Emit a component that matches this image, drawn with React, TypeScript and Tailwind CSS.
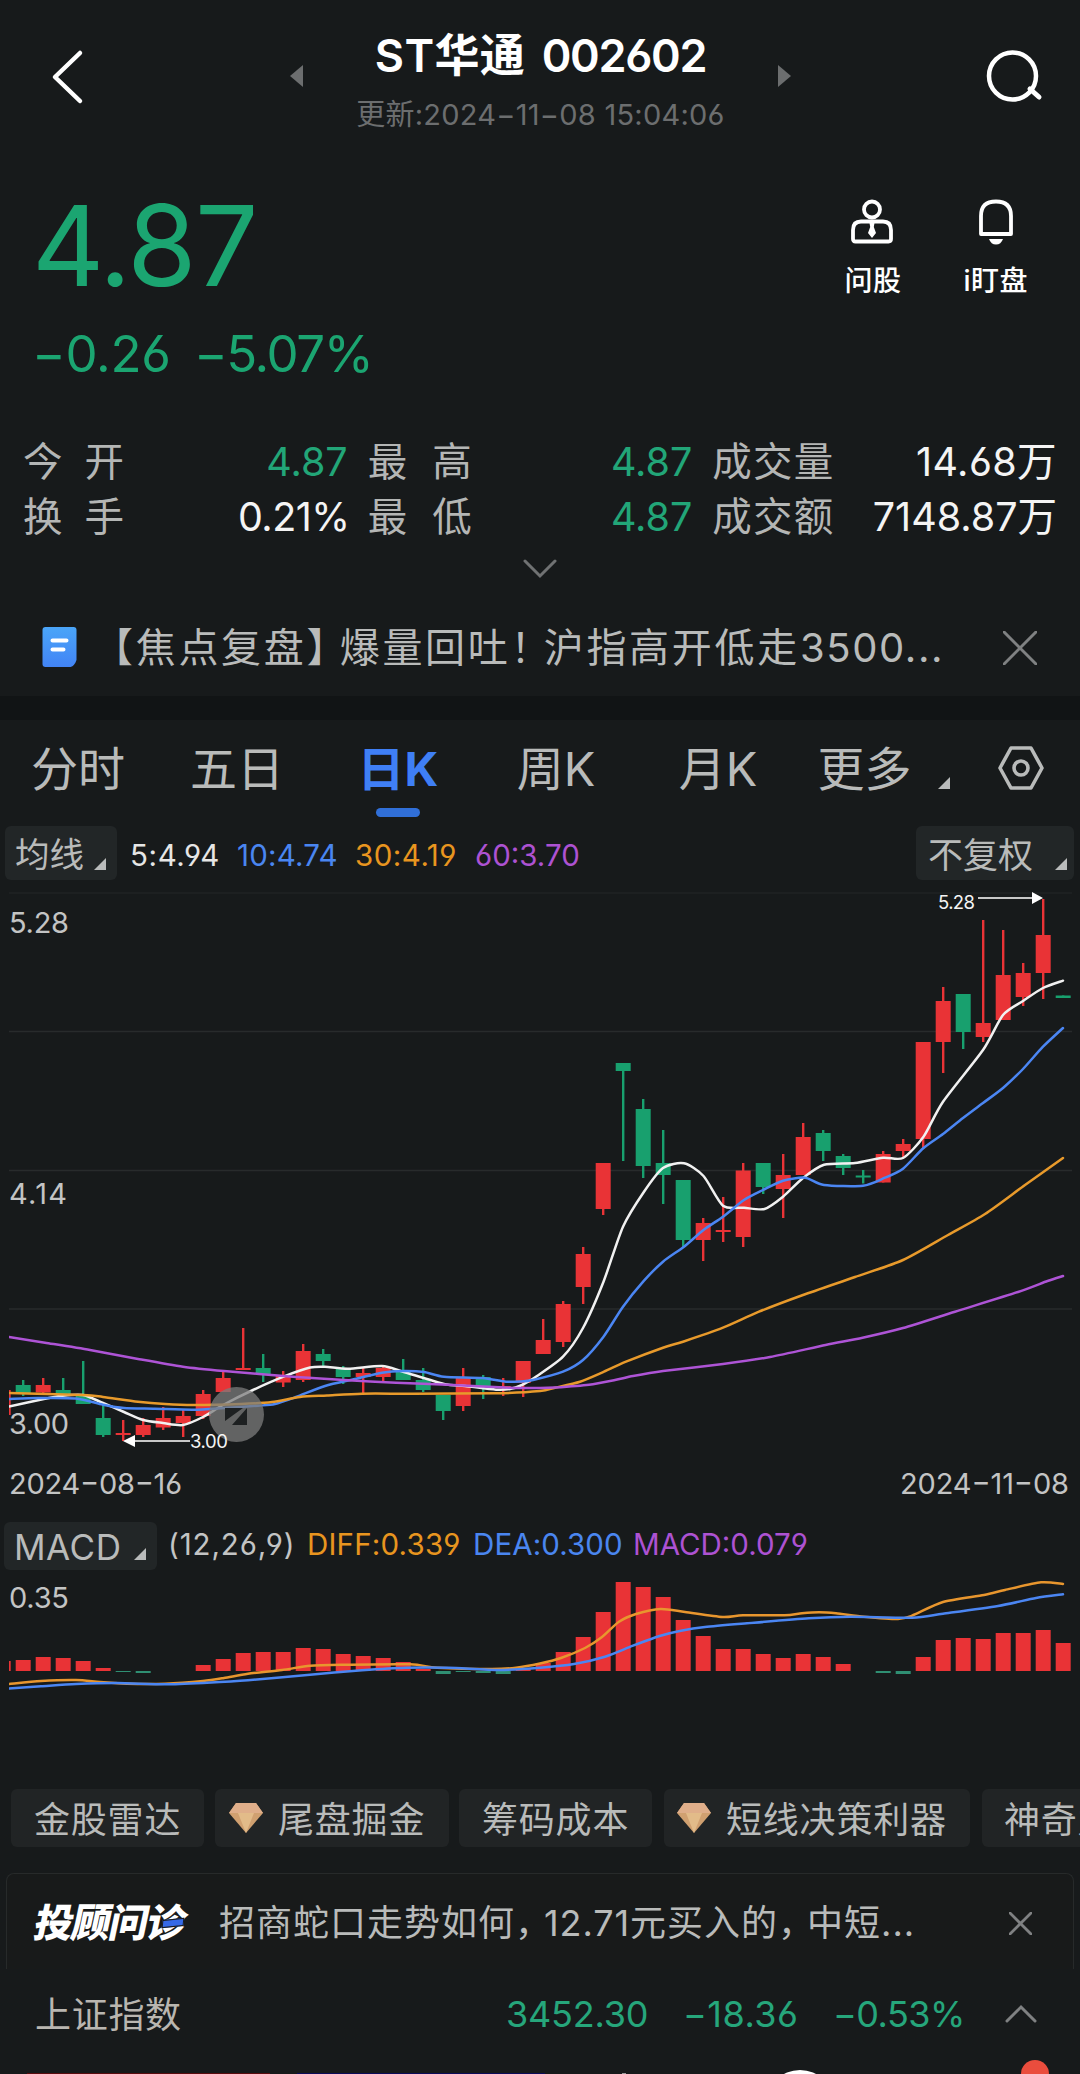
import type { ReactNode } from "react";

const UP = "#e93336";
const DOWN = "#18a06e";
const FIRST_X = 3.2;
const STEP = 20;

type Candle = [color: "r" | "g", top: number, bottom: number, high: number, low: number];

// y values of body top, body bottom, high and low
const candles: Candle[] = [
  ["r", 1390, 1415, 1390, 1415],
  ["g", 1385, 1393, 1380, 1396],
  ["r", 1385, 1392.5, 1378, 1393],
  ["g", 1390, 1394, 1378, 1396],
  ["g", 1395, 1404, 1361, 1404],
  ["g", 1418, 1435, 1405, 1437],
  ["r", 1433, 1435, 1420, 1441],
  ["r", 1425, 1435, 1418, 1437],
  ["r", 1418, 1427.5, 1407, 1430],
  ["r", 1416, 1423, 1410, 1437],
  ["r", 1394, 1416, 1390, 1419],
  ["r", 1378, 1392, 1370, 1392],
  ["r", 1368, 1370, 1328, 1370],
  ["g", 1368, 1374, 1354, 1382],
  ["r", 1376, 1382.5, 1371, 1387],
  ["r", 1351, 1380, 1344, 1382],
  ["g", 1354, 1361, 1349, 1366],
  ["g", 1369, 1377, 1366, 1384],
  ["r", 1373, 1377, 1367, 1393],
  ["r", 1368, 1377, 1366, 1381],
  ["g", 1371, 1380, 1359, 1380],
  ["g", 1380, 1390, 1368, 1392],
  ["g", 1395, 1411, 1395, 1420],
  ["r", 1377, 1406, 1368, 1411],
  ["g", 1377, 1386, 1375, 1399],
  ["r", 1386, 1388, 1378, 1396],
  ["r", 1361, 1383, 1361, 1397],
  ["r", 1340, 1354, 1319, 1354],
  ["r", 1304, 1342, 1301, 1347],
  ["r", 1254, 1287, 1247, 1304],
  ["r", 1163, 1209, 1163, 1215],
  ["g", 1063, 1071, 1063, 1161],
  ["g", 1109, 1166, 1099, 1178],
  ["g", 1163, 1175, 1130, 1204],
  ["g", 1180, 1240, 1180, 1247],
  ["r", 1223, 1240, 1218, 1261],
  ["r", 1230, 1232, 1197, 1242],
  ["r", 1170.5, 1237, 1163, 1247],
  ["g", 1163, 1187, 1163, 1194],
  ["r", 1175, 1189, 1154, 1218],
  ["r", 1137, 1175, 1123, 1175],
  ["g", 1133, 1151, 1130, 1161],
  ["g", 1156, 1168, 1154, 1175],
  ["g", 1175.5, 1177.5, 1170, 1183.5],
  ["r", 1154, 1182.5, 1151, 1182.5],
  ["r", 1144, 1151, 1139, 1158],
  ["r", 1042, 1139, 1042, 1149],
  ["r", 1001, 1042, 987, 1073],
  ["g", 994, 1032, 994, 1049],
  ["r", 1023, 1037, 920, 1042],
  ["r", 975, 1020, 930, 1020],
  ["r", 973, 997, 963, 1006],
  ["r", 935, 973, 899, 999],
  ["g", 995.5, 998, 995.5, 998],
];

const ma5 =
  "9,1406.5 45,1398.7 62,1395.7 83,1395 103,1403 124,1412 143,1420 163,1423 183,1425 203,1417 223,1405 253,1390 286,1375.7 310,1367.5 325,1366.7 348,1368.7 382,1366 403,1371.7 444,1384 465,1386 496,1389.7 510,1389 522,1385 537,1376 563,1356.7 583,1328 603.5,1281.7 623,1226.7 644,1191.7 663,1168 684,1163.3 703.5,1176 723,1205.7 744,1207.7 764.5,1209 783,1196.7 803,1178 824,1164.7 855,1163 883,1157.7 903,1158 923.5,1136.7 943,1101.7 983,1050 1003,1015 1023,1001 1043,988 1063,980.7";
const ma10 =
  "9,1399 38,1398 76,1398.5 103,1404.7 124,1408 155,1408.7 193,1409.7 224,1408 258,1405.7 275,1404 296,1397 325,1386 355,1379 382,1372.7 403,1371 424,1372 444,1376.7 482,1378 506,1381.7 520,1381.5 533,1380 563,1371.7 583,1360 603.5,1336.7 623,1306.7 644,1280.7 663,1261.7 684,1246.7 703.5,1230 723,1216.7 744,1200 763,1190 783,1180.7 805,1177.7 824,1185 863,1185.7 885,1177.7 903,1168.7 923.5,1148 943,1134 963,1118 983,1103 1003,1088 1023,1069 1043,1046.7 1063,1028";
const ma30 =
  "9,1393 83,1395 103,1397 138,1401.7 165,1404 193,1405 241,1404 272,1402 300,1397 327,1395.5 362,1393.7 413,1393.7 496,1393.3 540,1391 555,1387.7 580,1381.7 604,1371.7 626,1361.7 663,1347.7 683,1341.7 723,1327.7 759,1311.7 803,1295 855,1277 903,1260 948,1235 985,1214 1025,1185 1063,1158";
const ma60 =
  "9,1337 45,1342.7 90,1350 138,1359 183,1366.7 224,1371 293,1376.7 344,1380 396,1382.7 448,1384.7 510,1387.7 540,1388 555,1387.5 589,1384.7 615,1380 633,1376 663,1371 723,1364 770,1357 825.6,1345 862.6,1337.7 903,1328 955,1311.7 1018,1292 1047.5,1281 1063,1276";
const diff =
  "9,1684 41,1681 76,1680 100,1682 127,1683.7 165,1683.7 203,1681 224,1678 248,1673.7 282,1670 310,1665.7 341,1664.7 410,1664.3 437,1667.7 492,1669 516,1667.7 540,1663.5 561,1658 585,1648 602,1637 619,1621.7 636,1614 660.5,1609 685,1612 722.5,1617 743,1615.3 784.5,1615.3 802,1613.3 819,1612.3 836,1613.3 864,1616.7 898,1619 912,1615.7 943,1602 984,1595 1005,1590 1041,1582.3 1063,1584";
const dea =
  "9,1688.5 41,1686.3 76,1684 117,1683 165,1684.3 207,1682.7 248,1680.3 310,1674.7 362,1670.3 406,1667.7 448,1667.7 499,1670 540,1667.7 574,1664 605,1656.7 633,1645.7 660.5,1635.7 681,1630.7 705,1627 747,1623.3 809,1618.3 850,1616.7 912,1617.7 943,1613.7 998,1606 1036,1598 1063,1594.3";

// bar height above (+) or below (-) the zero line
const macd = [
  10, 11, 14, 13, 10, 3, -1, -2, 0, 0, 6, 12, 18, 19, 19, 23, 22, 17, 15, 13, 9, 2, -3, -1, -2, -3, 2, 8, 19, 34, 59,
  89, 84, 74, 51, 35, 22, 22, 17, 13, 17, 14, 7, 0, -2, -3, 14, 31, 33, 32, 38, 38, 41, 28,
];

function smooth(points: string) {
  const p = points.split(" ").map((s) => s.split(",").map(Number));
  let d = `M${p[0][0]} ${p[0][1]}`;
  for (let i = 0; i < p.length - 1; i++) {
    const a = p[i - 1] ?? p[i];
    const b = p[i];
    const c = p[i + 1];
    const e = p[i + 2] ?? c;
    d += `C${b[0] + (c[0] - a[0]) / 8} ${b[1] + (c[1] - a[1]) / 8} ${c[0] - (e[0] - b[0]) / 8} ${c[1] - (e[1] - b[1]) / 8} ${c[0]} ${c[1]}`;
  }
  return d;
}

function Line({ points, color }: { points: string; color: string }) {
  return <path d={smooth(points)} fill="none" stroke={color} strokeWidth="2.5" strokeLinecap="round" />;
}

function Corner({ className = "" }: { className?: string }) {
  return (
    <svg width="12" height="12" viewBox="0 0 12 12" className={className}>
      <path d="M12 0V12H0Z" fill="#b9bbbb" />
    </svg>
  );
}

function Cross({ size, width }: { size: number; width: number }) {
  return (
    <svg width={size} height={size} viewBox={`0 0 ${size} ${size}`} fill="none" stroke="#7f8182" strokeWidth={width}>
      <path d={`M1 1L${size - 1} ${size - 1}M${size - 1} 1L1 ${size - 1}`} strokeLinecap="round" />
    </svg>
  );
}

function Header() {
  return (
    <header className="flex h-[150px] items-start">
      <svg width="34" height="56" viewBox="0 0 34 56" className="mt-[49px] ml-[50px]">
        <path d="M30 4L5 28L30 52" fill="none" stroke="#fff" strokeWidth="4.5" strokeLinecap="round" strokeLinejoin="round" />
      </svg>
      <svg width="13" height="22" viewBox="0 0 13 22" className="mt-[65px] ml-[206px]">
        <path d="M13 0V22L0 11Z" fill="#6c6e6f" />
      </svg>
      <div className="flex w-[475px] flex-col items-center">
        <h1 className="mt-[26px] text-[45px] leading-[60px] font-semibold tracking-[-1.3px] whitespace-nowrap text-white [word-spacing:5px]">
          <span className="tracking-[0.3px]">ST华通 </span>002602
        </h1>
        <p className="mt-[10px] text-[29px] leading-[38px] tracking-[0.25px] whitespace-nowrap text-[#6c6e6f]">
          更新:2024−11−08 15:04:06
        </p>
      </div>
      <svg width="13" height="22" viewBox="0 0 13 22" className="mt-[65px]">
        <path d="M0 0V22L13 11Z" fill="#6c6e6f" />
      </svg>
      <svg width="58" height="56" viewBox="0 0 58 56" className="mt-[49px] ml-[195px]" fill="none" stroke="#fff">
        <circle cx="26.5" cy="27" r="23.5" strokeWidth="4.5" />
        <path d="M44 40L53 48" strokeWidth="5" strokeLinecap="round" />
      </svg>
    </header>
  );
}

function Quote() {
  return (
    <section className="flex h-[276px] justify-between pr-[52px] pl-[32px]">
      <div className="text-[#1ba571]">
        <p className="mt-[27px] text-[112px] leading-[136px] tracking-[-1.5px]">4.87</p>
        <p className="mt-[13px] flex text-[51px] leading-[56px]">
          <span className="w-[162px] tracking-[-0.3px]">−0.26</span>
          <span className="tracking-[-1.4px]">−5.07%</span>
        </p>
      </div>
      <div className="mt-[48px] flex text-[28px] leading-[36px] font-medium text-white">
        <div className="flex flex-col items-center">
          <svg width="46" height="48" viewBox="0 0 46 48" fill="none" stroke="#fff" strokeWidth="3.8">
            <circle cx="22" cy="11.5" r="8" />
            <path d="M11 23.5H33Q41 23.5 41 32V41Q41 43.5 38.5 43.5H5.5Q3 43.5 3 41V32Q3 23.5 11 23.5Z" />
            <path d="M19.5 25H24.5L23.8 29L26 35L22 40L18 35L20.2 29Z" fill="#fff" strokeWidth="0" />
          </svg>
          <span className="mt-[17px] tracking-[0.5px]">问股</span>
        </div>
        <div className="ml-[62px] flex flex-col items-center">
          <svg width="46" height="48" viewBox="0 0 46 48" fill="none" stroke="#fff" strokeWidth="3.8">
            <path d="M8 36V18Q8 3.5 23 3.5T38 18V36Z" strokeLinejoin="round" />
            <path d="M16 41H30Q28 46.5 23 46.5T16 41Z" fill="#fff" strokeWidth="0" />
          </svg>
          <span className="mt-[17px] tracking-[0.5px]">i盯盘</span>
        </div>
      </div>
    </section>
  );
}

type StatProps = { label: string; value: string; className: string; labelClass: string; valueClass: string };

function Stat({ label, value, className, labelClass, valueClass }: StatProps) {
  return (
    <div className={`flex justify-between ${className}`}>
      <span className={`flex justify-between text-[#b4b6b5] ${labelClass}`}>
        {[...label].map((c) => (
          <span key={c}>{c}</span>
        ))}
      </span>
      <span className={valueClass}>{value}</span>
    </div>
  );
}

function Stats() {
  const green = "text-[#22a678]";
  const white = "text-[#f4f4f4]";
  return (
    <section className="h-[164px] px-[23px] pt-[9px] text-[39.5px] leading-[55px] whitespace-nowrap">
      <div className="flex">
        <Stat label="今开" value="4.87" className="w-[325px]" labelClass="w-[101px]" valueClass={green} />
        <Stat label="最高" value="4.87" className="ml-[20px] w-[325px]" labelClass="w-[104px]" valueClass={green} />
        <Stat label="成交量" value="14.68万" className="ml-[20px] w-[345px]" labelClass="w-[121px]" valueClass={`${white} tracking-[0.4px]`} />
      </div>
      <div className="flex">
        <Stat label="换手" value="0.21%" className="w-[325px]" labelClass="w-[101px]" valueClass={`${white} -mr-[2px] tracking-[-0.5px]`} />
        <Stat label="最低" value="4.87" className="ml-[20px] w-[325px]" labelClass="w-[104px]" valueClass={green} />
        <Stat label="成交额" value="7148.87万" className="ml-[20px] w-[345px]" labelClass="w-[121px]" valueClass={white} />
      </div>
      <svg width="34" height="20" viewBox="0 0 34 20" className="mx-auto mt-[14px]">
        <path d="M2 2L17 17L32 2" fill="none" stroke="#707273" strokeWidth="3" strokeLinecap="round" />
      </svg>
    </section>
  );
}

function News() {
  return (
    <section className="flex h-[106px] items-center pt-[9px] pl-[42px]">
      <svg width="35" height="40" viewBox="0 0 34 40" className="mt-[-1px]">
        <defs>
          <linearGradient id="doc" x1="0" y1="0" x2="0" y2="1">
            <stop offset="0" stopColor="#4aa5f8" />
            <stop offset="1" stopColor="#4284f6" />
          </linearGradient>
        </defs>
        <path d="M3 0H31Q34 0 34 3V33Q32 39 28 40H3Q0 40 0 37V3Q0 0 3 0Z" fill="url(#doc)" />
        <path d="M10 13.5H24M10 22.5H21" stroke="#fff" strokeWidth="4" strokeLinecap="round" />
      </svg>
      <p className="ml-[16px] w-[867px] text-[40px] leading-[56px] tracking-[2.7px] whitespace-nowrap text-[#b9bbba]">
        【焦点复盘<span className="tracking-[-6.8px]">】</span>爆量回吐<span className="tracking-[-6.8px]">！</span>沪指高开低走
        <span className="tracking-[1.6px]">3500...</span>
      </p>
      <div className="ml-[43px]">
        <Cross size={34} width={3} />
      </div>
    </section>
  );
}

function Tab({ className, active, children }: { className: string; active?: boolean; children: ReactNode }) {
  return (
    <div className={`flex flex-col items-center ${className} ${active ? "font-bold text-[#3f7ff5]" : ""}`}>
      <span className="leading-[70px]">{children}</span>
      {active && <i className="mt-[4px] h-[9px] w-[44px] rounded-full bg-[#306fd8]" />}
    </div>
  );
}

function Tabs() {
  return (
    <nav className="flex h-[106px] pt-[14px] pl-[31px] text-[47px] whitespace-nowrap text-[#b9bbba]">
      <Tab className="w-[94px]">分时</Tab>
      <Tab className="ml-[65px] w-[94px]">五日</Tab>
      <Tab className="ml-[74px] w-[80px]" active>
        日K
      </Tab>
      <Tab className="ml-[78px] w-[80px]">周K</Tab>
      <Tab className="ml-[82px] w-[80px]">月K</Tab>
      <Tab className="ml-[59px] w-[95px]">更多</Tab>
      <Corner className="mt-[43px] ml-[26px]" />
      <svg width="48" height="46" viewBox="0 0 48 46" className="mt-[11px] ml-[47px]" fill="none" stroke="#b9bbba" strokeWidth="3.6">
        <path d="M14 3H34L45 23L34 43H14L3 23Z" strokeLinejoin="round" />
        <circle cx="24" cy="23" r="7" />
      </svg>
    </nav>
  );
}

function MaBar() {
  return (
    <div className="flex h-[59px] items-start pl-[5px] text-[29.5px] leading-[58px] whitespace-nowrap">
      <div className="flex h-[54px] w-[112px] rounded-md bg-[#222627] pl-[10px] text-[34.5px] text-[#b9bbba]">
        均线
        <Corner className="mt-[32px] ml-[10px]" />
      </div>
      <span className="ml-[13px] w-[107px] tracking-[0.6px] text-[#e6e6e6]">5:4.94</span>
      <span className="w-[118px] tracking-[0.2px] text-[#4a86f0]">10:4.74</span>
      <span className="w-[120px] tracking-[0.5px] text-[#e8951f]">30:4.19</span>
      <span className="w-[120px] text-[#ad52d2]">60:3.70</span>
      <div className="ml-[321px] flex h-[54px] w-[158px] rounded-md bg-[#222627] pl-[12px] text-[35px] text-[#b9bbba]">
        不复权
        <Corner className="mt-[32px] ml-[22px]" />
      </div>
    </div>
  );
}

function KLineChart() {
  return (
    <svg width="1080" height="629" viewBox="0 885 1080 629">
      <clipPath id="plot">
        <rect x="9" y="885" width="1071" height="629" />
      </clipPath>
      {[893, 1031.5, 1170.5, 1309].map((y) => (
        <path key={y} d={`M9 ${y}H1072`} stroke={y === 893 ? "#202324" : "#282b2c"} strokeWidth="1.5" />
      ))}
      <g clipPath="url(#plot)">
        {candles.map(([c, top, bottom, high, low], i) => {
          const x = FIRST_X + i * STEP;
          const color = c === "r" ? UP : DOWN;
          return (
            <g key={i} fill={color}>
              <rect x={x - 1.2} y={high} width="2.4" height={low - high} />
              <rect x={x - 7.5} y={top} width="15" height={bottom - top} />
            </g>
          );
        })}
        <Line points={ma5} color="#f1f1f1" />
        <Line points={ma10} color="#4b86f3" />
        <Line points={ma30} color="#e89a2b" />
        <Line points={ma60} color="#ae54d6" />
      </g>
      <circle cx="236.5" cy="1414.5" r="27.5" fill="#7c7c7c" fillOpacity="0.75" />
      <path d="M225 1415V1408H243L225 1421Z M247 1408V1425H232Z" fill="#1d2021" />
      <path d="M130 1441H190M978 898H1035" stroke="#c8c8c8" strokeWidth="2" />
      <path d="M123 1441L135 1435V1447Z M1043 898L1032 892V904Z" fill="#fff" />
      <g fill="#f4f4f4" fontSize="18.5">
        <text x="190" y="1448" textLength="38">3.00</text>
        <text x="938" y="909" textLength="37">5.28</text>
      </g>
      <g fill="#c3c4c4" fontSize="29">
        <text x="9" y="933" textLength="60">5.28</text>
        <text x="9" y="1204" textLength="58">4.14</text>
        <text x="9" y="1434" textLength="60">3.00</text>
        <text x="9" y="1494" textLength="173">2024−08−16</text>
        <text x="900" y="1494" textLength="169">2024−11−08</text>
      </g>
    </svg>
  );
}

function Macd() {
  return (
    <section className="h-[275px]">
      <div className="flex h-[56px] items-start pt-[8px] pl-[4px] text-[29.5px] leading-[45px] whitespace-nowrap">
        <div className="flex h-[48px] w-[153px] rounded-md bg-[#222627] pl-[10px] text-[35px] leading-[50px] tracking-[0.5px] text-[#b9bbba]">
          <span className="w-[106px]">MACD</span>
          <Corner className="mt-[26px] ml-[14px]" />
        </div>
        <span className="ml-[11px] w-[139px] tracking-[0.9px] text-[#c3c4c4]">(12,26,9)</span>
        <span className="w-[166px] tracking-[0.2px] text-[#e8951f]">DIFF:0.339</span>
        <span className="w-[160px] tracking-[0.1px] text-[#4a86f0]">DEA:0.300</span>
        <span className="text-[#ad52d2]">MACD:0.079</span>
      </div>
      <svg width="1080" height="130" viewBox="0 1570 1080 130">
        <text x="9" y="1608" fill="#c3c4c4" fontSize="29" textLength="60">
          0.35
        </text>
        <clipPath id="macd">
          <rect x="9" y="1570" width="1071" height="130" />
        </clipPath>
        <g clipPath="url(#macd)">
          {macd.map((h, i) => (
            <rect
              key={i}
              x={FIRST_X + i * STEP - 7.5}
              y={h > 0 ? 1671 - h : 1671}
              width="15"
              height={Math.abs(h)}
              fill={h > 0 ? UP : "#2f8f73"}
            />
          ))}
          <Line points={diff} color="#e8962e" />
          <Line points={dea} color="#4b86f3" />
        </g>
      </svg>
    </section>
  );
}

function Diamond() {
  return (
    <svg width="34" height="30" viewBox="0 0 34 30">
      <path d="M7 0H27L34 10L17 30L0 10Z" fill="#d0a070" />
      <path d="M7 0H27L34 10H0Z" fill="#dfae8a" />
      <path d="M9 10H25L17 30Z" fill="#e2bb89" />
    </svg>
  );
}

const tools = [
  { name: "金股雷达", className: "w-[193px] pl-[23px]" },
  { name: "尾盘掘金", className: "ml-[11px] w-[234px] pl-[14px]", gem: true },
  { name: "筹码成本", className: "ml-[10px] w-[193px] pl-[23px]" },
  { name: "短线决策利器", className: "ml-[12px] w-[306px] pl-[13px]", gem: true },
  { name: "神奇九转", className: "ml-[12px] w-[192px] pl-[22px]" },
];

function Tools() {
  return (
    <div className="flex h-[84px] overflow-hidden pl-[11px] text-[36px] tracking-[0.8px] whitespace-nowrap text-[#b9bbba]">
      {tools.map((t) => (
        <div key={t.name} className={`flex h-[58px] shrink-0 items-center gap-[15px] rounded-md bg-[#212425] ${t.className}`}>
          {t.gem && <Diamond />}
          <span className="pt-[4px] leading-[54px]">{t.name}</span>
        </div>
      ))}
    </div>
  );
}

function Advisor() {
  return (
    <div className="mx-[6px] flex h-[96px] items-center rounded-t-lg border-x border-t border-[#272a2a] bg-[#181a1a] pt-[3px] pl-[28px]">
      <div className="relative w-[184px]">
        <span className="inline-block -skew-x-12 text-[39px] leading-[54px] font-black tracking-[-1.5px] text-white">投顾问诊</span>
        <i className="absolute top-[23px] left-[127px] h-[8px] w-[22px] -skew-x-12 -rotate-6 border border-[#181a1a] bg-[#3569e6]" />
      </div>
      <p className="w-[774px] text-[36px] leading-[54px] tracking-[1px] whitespace-nowrap text-[#b9bbba]">
        招商蛇口走势如何<span className="tracking-[-7px]">，</span>
        <span className="tracking-[0.9px]">12.71</span>元买入的<span className="tracking-[-7px]">，</span>中短...
      </p>
      <div className="ml-[16px]">
        <Cross size={23} width={2.8} />
      </div>
    </div>
  );
}

function IndexBar() {
  return (
    <div className="flex h-[90px] items-center pl-[35px] text-[36px] whitespace-nowrap text-[#26a67b]">
      <span className="w-[471px] pt-[2px] tracking-[0.7px] text-[#b9b6b0]">上证指数</span>
      <span className="w-[177px] tracking-[-0.2px]">3452.30</span>
      <span className="w-[150px] tracking-[0.5px]">−18.36</span>
      <span className="w-[172px] tracking-[-0.5px]">−0.53%</span>
      <svg width="32" height="20" viewBox="0 0 32 20">
        <path d="M2 17L16 3L30 17" fill="none" stroke="#7f8182" strokeWidth="3" strokeLinecap="round" />
      </svg>
    </div>
  );
}

function BottomEdge() {
  return (
    <svg width="1080" height="15" viewBox="0 0 1080 15">
      <path d="M27 14.5H270" stroke="#5a0d10" />
      <path d="M297 14.5H545" stroke="#0c0c58" />
      <path d="M622 14.5H626" stroke="#999" />
      <circle cx="800" cy="45" r="34" fill="#fff" />
      <circle cx="1035" cy="15" r="14" fill="#ea4d3d" />
    </svg>
  );
}

export default function App() {
  return (
    <main className="flex h-[2074px] w-[1080px] flex-col overflow-hidden bg-[#171a1b] font-['Inter','Noto_Sans_CJK_SC',sans-serif] [font-feature-settings:'cv03','cv04']">
      <Header />
      <Quote />
      <Stats />
      <News />
      <div className="h-[24px] shrink-0 bg-[#111415]" />
      <Tabs />
      <MaBar />
      <KLineChart />
      <Macd />
      <Tools />
      <Advisor />
      <IndexBar />
      <BottomEdge />
    </main>
  );
}
